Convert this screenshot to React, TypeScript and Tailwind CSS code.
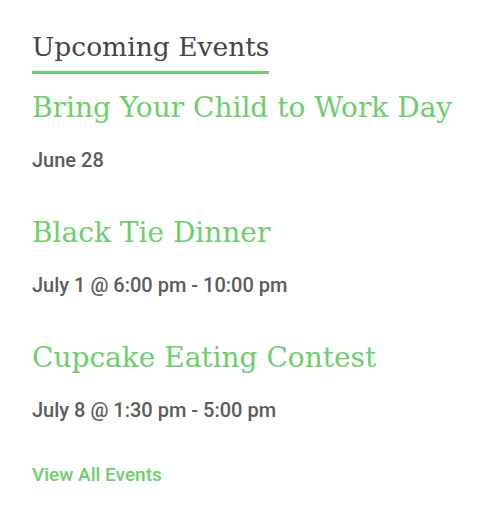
const events = [
  { title: "Bring Your Child to Work Day", date: "June 28" },
  { title: "Black Tie Dinner", date: "July 1 @ 6:00 pm - 10:00 pm" },
  { title: "Cupcake Eating Contest", date: "July 8 @ 1:30 pm - 5:00 pm" },
];

export default function App() {
  return (
    <div className="bg-white w-[478px] h-[512px] pl-8 pt-[28px]" style={{ fontFamily: "Roboto, 'Liberation Sans', sans-serif" }}>
      <h2
        className="inline-block text-[26.5px] leading-[38px] text-[#444] border-b-[3px] border-[#6ccf6a] pb-[5px]"
        style={{ fontFamily: "'DejaVu Serif', 'Liberation Serif', serif" }}
      >
        Upcoming Events
      </h2>
      <div className="flex flex-col">
        {events.map((e, i) => (
          <div key={i} className="flex flex-col">
            <h3
              className="text-[28px] leading-[40px] text-[#6ccf6a] mt-[14px] whitespace-nowrap"
              style={{ fontFamily: "'DejaVu Serif', 'Liberation Serif', serif" }}
            >
              {e.title}
            </h3>
            <p className="text-[20px] leading-[24px] font-medium text-[#5c5c5c] mt-[20px] mb-[27px]">{e.date}</p>
          </div>
        ))}
      </div>
      <a href="#" className="block text-[19px] leading-[24px] font-medium text-[#6ccf6a] mt-[14px]">
        View All Events
      </a>
    </div>
  );
}
